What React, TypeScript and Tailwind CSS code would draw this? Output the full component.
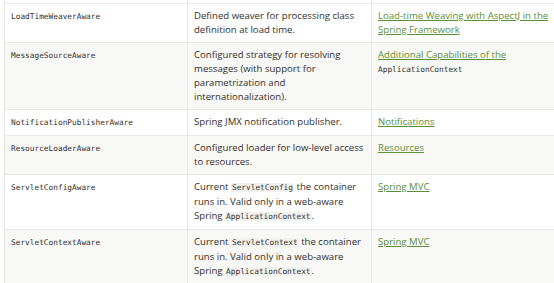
import React from "react";

type Part = string | { code: string } | { link: string } | { linkCode: string } | { br: true };

const rows: { name: string; desc: Part[]; ref: Part[] }[] = [
  {
    name: "LoadTimeWeaverAware",
    desc: ["Defined weaver for processing class definition at load time."],
    ref: [{ link: "Load-time Weaving with AspectJ in the Spring Framework" }],
  },
  {
    name: "MessageSourceAware",
    desc: ["Configured strategy for resolving messages (with support for parametrization and internationalization)."],
    ref: [{ link: "Additional Capabilities of the" }, { br: true }, { linkCode: "ApplicationContext" }],
  },
  {
    name: "NotificationPublisherAware",
    desc: ["Spring JMX notification publisher."],
    ref: [{ link: "Notifications" }],
  },
  {
    name: "ResourceLoaderAware",
    desc: ["Configured loader for low-level access to resources."],
    ref: [{ link: "Resources" }],
  },
  {
    name: "ServletConfigAware",
    desc: ["Current ", { code: "ServletConfig" }, " the container runs in. Valid only in a web-aware Spring ", { code: "ApplicationContext" }, "."],
    ref: [{ link: "Spring MVC" }],
  },
  {
    name: "ServletContextAware",
    desc: ["Current ", { code: "ServletContext" }, " the container runs in. Valid only in a web-aware Spring ", { code: "ApplicationContext" }, "."],
    ref: [{ link: "Spring MVC" }],
  },
];

const mono = "font-['DejaVu_Sans_Mono',monospace] text-[7.8px] leading-[14px]";

function render(parts: Part[]) {
  return parts.map((p, i) => {
    if (typeof p === "string") return <span key={i}>{p}</span>;
    if ("br" in p) return <br key={i} />;
    if ("code" in p)
      return (
        <code key={i} className={`${mono} bg-[#f1f1ef] px-[1px] text-[#34302d]`}>
          {p.code}
        </code>
      );
    if ("linkCode" in p)
      return (
        <code key={i} className={`${mono} text-[#34302d]`}>
          {p.linkCode}
        </code>
      );
    return (
      <a key={i} href="#" className="text-[#5b8f3a] underline underline-offset-[1px]">
        {p.link}
      </a>
    );
  });
}

const App: React.FC = () => {
  return (
    <div className="w-[554px] h-[283px] overflow-hidden bg-white">
      <div className="ml-[4px] w-[570px] border-l border-[#e4e4e2] font-['Open_Sans',sans-serif] text-[9.6px] leading-[14px] text-[#34302d]">
        <div className="grid grid-cols-[183px_184px_1fr] h-[4px] border-b border-[#e8e8e6]">
          <div className="border-r border-[#e8e8e6]" />
          <div className="border-r border-[#e8e8e6]" />
          <div />
        </div>
        {rows.map((r, i) => (
          <div
            key={r.name}
            className={`grid grid-cols-[183px_184px_1fr] border-b border-[#e8e8e6] ${i % 2 === 1 ? "bg-[#f8f8f6]" : "bg-white"}`}
          >
            <div className="border-r border-[#e8e8e6] pl-[6px] pr-[6px] py-[5px]">
              <code className={mono}>{r.name}</code>
            </div>
            <div className="border-r border-[#e8e8e6] pl-[6px] pr-[2px] py-[5px]">{render(r.desc)}</div>
            <div className="w-[184px] pl-[6px] pr-[2px] py-[5px]">{render(r.ref)}</div>
          </div>
        ))}
      </div>
    </div>
  );
};

export default App;
